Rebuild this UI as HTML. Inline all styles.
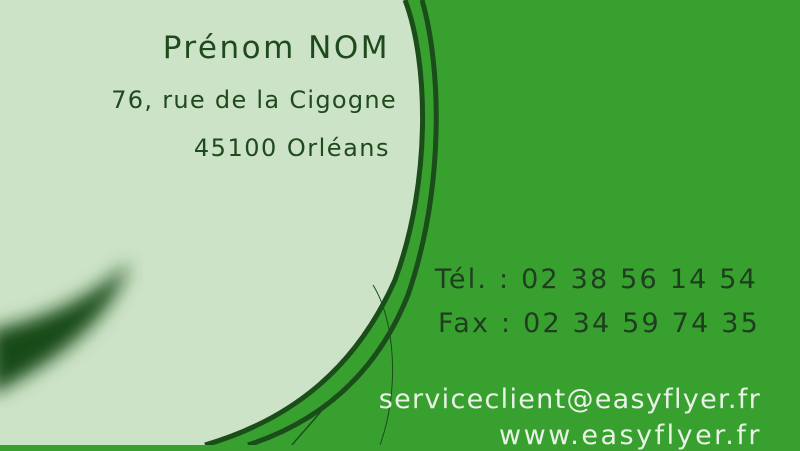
<!DOCTYPE html><html><head><style>
body{margin:0;width:800px;height:445px;overflow:hidden;background:#38a02f;position:relative;font-family:"DejaVu Sans","Liberation Sans",sans-serif}
svg{position:absolute;left:0;top:0}
.t{position:absolute;white-space:nowrap;text-align:right}
</style></head><body>
<svg width="800" height="445">
<defs><filter id="b"><feGaussianBlur stdDeviation="9"/></filter></defs>
<path d="M0,0 L405,0 C428,60 432,180 395,280 C355,370 290,420 205,445 L0,445 Z" fill="#cde3c8"/>
<path d="M-10,330 C40,320 90,300 130,262 C110,320 60,360 -10,395 Z" fill="#134a15" filter="url(#b)"/>
<path d="M405,0 C428,60 432,180 395,280 C355,370 290,420 205,445" fill="none" stroke="#1b4d1a" stroke-width="5"/>
<path d="M422,0 C442,70 444,190 408,295 C378,370 325,420 248,445" fill="none" stroke="#1b4d1a" stroke-width="5"/>
<path d="M373,285 C395,320 400,390 380,445" fill="none" stroke="#1b4d1a" stroke-width="1"/>
<path d="M322,410 C310,425 300,435 292,445" fill="none" stroke="#1b4d1a" stroke-width="1.5"/>
</svg>
<div class="t" style="right:410px;top:30px;font-size:31px;color:#1e4a1e;letter-spacing:2.5px">Prénom NOM</div>
<div class="t" style="right:403px;top:86px;font-size:24px;color:#1e4a1e;letter-spacing:1.3px">76, rue de la Cigogne</div>
<div class="t" style="right:410px;top:134px;font-size:24px;color:#1e4a1e;letter-spacing:1.5px">45100 Orléans</div>
<div class="t" style="right:42px;top:264px;font-size:27px;color:#1f3d1f;letter-spacing:2.2px">Tél. : 02 38 56 14 54</div>
<div class="t" style="right:40px;top:308px;font-size:27px;color:#1f3d1f;letter-spacing:2.2px">Fax : 02 34 59 74 35</div>
<div class="t" style="right:39px;top:384px;font-size:27px;color:#e8f3e6;letter-spacing:1.3px">serviceclient@easyflyer.fr</div>
<div class="t" style="right:38px;top:420px;font-size:27px;color:#e8f3e6;letter-spacing:2.5px">www.easyflyer.fr</div>
</body></html>
